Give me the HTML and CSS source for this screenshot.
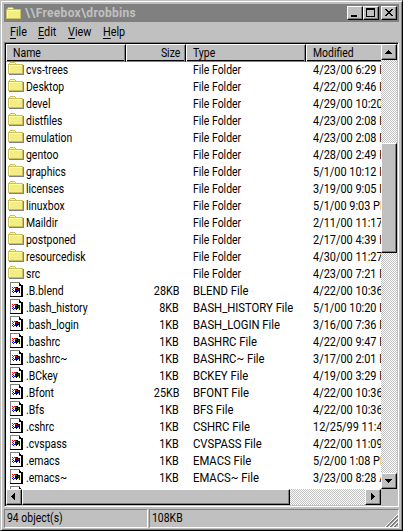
FILE: index.html
```
<!DOCTYPE html>
<html lang="en">
<head>
<meta charset="utf-8">
<title>\\Freebox\drobbins</title>
<link rel="stylesheet" href="styles.css">
</head>
<body>
<svg width="0" height="0" class="defs" shape-rendering="crispEdges">
  <symbol id="folder" viewBox="0 0 16 13">
    <path fill="#c8c060" d="M2 0h5v1h1v1h7v10H0V2h1V1h1z"/>
    <path fill="#ffff98" d="M2 1h5v1H2zM1 3h13v8H1z"/>
    <path fill="#f4ec84" d="M2 4h12v7H2z"/>
    <path fill="#808080" d="M15 3h1v10H1v-1h14z"/>
  </symbol>
  <symbol id="file" viewBox="0 0 13 16">
    <path fill="#fff" d="M0 0h10l2 3v12H0z"/>
    <path fill="#808080" d="M0 0h10v1H1v13H0z"/>
    <path fill="#000" d="M9 1h1v1h1v1h2v12H0v-1h11V4H9z"/>
    <path fill="#000" d="M6 5h2v1h2v5H9v-1H7v1H6v-1H5V6h1z"/>
    <path fill="#f00" d="M2 5h1v1H2zM4 5h2v1H4zM3 6h1v1H3zM5 6h2v1H5zM2 7h1v1H2z"/>
    <path fill="#00f" d="M2 9h1v1H2zM3 8h1v1H3zM5 8h2v1H5zM4 9h2v1H4zM3 10h1v1H3z"/>
    <path fill="#008000" d="M8 7h1v1H8z"/>
    <path fill="#e0e000" d="M8 9h1v1H8z"/>
  </symbol>
</svg>
<div class="window">
  <header class="title">
    <svg class="folder"><use href="#folder"/></svg>
    <h1>\\Freebox\drobbins</h1>
    <div class="btn ctl"><svg viewBox="0 0 14 12"><path d="M3 8h6v2H3z"/></svg></div>
    <div class="btn ctl"><svg viewBox="0 0 14 12"><path fill-rule="evenodd" d="M2 1h9v9H2zM3 3v6h7V3z"/></svg></div>
    <div class="btn ctl close"><svg viewBox="0 0 14 12"><path d="M3 2h2v1h1v1h2V3h1V2h2v1h-1v1H9v1H8v1h1v1h1v1h1v1H9V8H8V7H6v1H5v1H3V8h1V7h1V6h1V5H5V4H4V3H3z"/></svg></div>
  </header>
  <nav class="menu"><span><u>F</u>ile</span><span><u>E</u>dit</span><span><u>V</u>iew</span><span><u>H</u>elp</span></nav>
  <main class="list">
    <section class="view">
      <div class="head"><div><span>Name</span></div><div class="size"><span>Size</span></div><div><span>Type</span></div><div><span>Modified</span></div></div>
      <div class="rows" id="rows"></div>
    </section>
    <div class="vbar">
      <div class="btn arrow"><svg viewBox="0 0 14 14"><path d="M6 5h1v1h1v1h1v1h1v1H3V8h1V7h1V6h1z"/></svg></div>
      <div class="btn vthumb"></div>
      <div class="btn arrow down"><svg viewBox="0 0 14 14"><path d="M3 5h7v1H9v1H8v1H7v1H6V8H5V7H4V6H3z"/></svg></div>
    </div>
    <div class="hbar">
      <div class="btn arrow"><svg viewBox="0 0 14 14"><path d="M8 3v7H7V9H6V8H5V7H4V6h1V5h1V4h1V3z"/></svg></div>
      <div class="btn hthumb"></div>
      <div class="btn arrow right"><svg viewBox="0 0 14 14"><path d="M5 3h1v1h1v1h1v1h1v1H8v1H7v1H6v1H5z"/></svg></div>
    </div>
    <div class="corner"></div>
  </main>
  <footer class="status">
    <div><span>94 object(s)</span></div>
    <div><span>108KB</span><svg class="grip" viewBox="0 0 13 13"><path stroke="#fff" d="M0 13L13 0M4 13l9-9M8 13l5-5"/><path stroke="#808080" stroke-width="1.6" d="M1.5 13L13 1.5M5.5 13L13 5.5M9.5 13L13 9.5"/></svg></div>
  </footer>
</div>
<script src="rows.js"></script>
</body>
</html>
```
FILE: styles.css
```
* { box-sizing: border-box; }
body { margin: 0; overflow: hidden; font: 12px/17px Roboto, "Liberation Sans", sans-serif; color: #000; }
.defs { position: absolute; }
svg { display: block; shape-rendering: crispEdges; }
.window { width: 403px; height: 531px; background: #c0c0c0; padding: 3px 3px 2px; border: 1px solid #c0c0c0; border-right-color: #000; border-bottom-color: #000; box-shadow: inset 1px 1px #fff, inset -1px -1px #808080; }
.title { display: flex; align-items: center; height: 18px; width: 395px; background: #808080; padding: 0 2px; }
.title h1 { flex: 1; margin: 0 0 0 3px; font: bold 12px/18px Roboto, sans-serif; color: #c0c0c0; letter-spacing: .3px; white-space: pre; }
.folder { width: 16px; height: 13px; flex: none; }
.btn { background: #c0c0c0; border: 1px solid #fff; border-right-color: #000; border-bottom-color: #000; box-shadow: inset -1px -1px #808080; flex: none; }
.ctl { width: 16px; height: 14px; }
.close { margin-left: 2px; }
.ctl svg { width: 14px; height: 12px; }
.menu { display: grid; grid-template-columns: 28px 30px 35px 40px; height: 20px; padding: 0 0 0 6px; line-height: 20px; }
.menu span { transform: scaleX(.9); transform-origin: 0 0; }
.menu u { text-underline-offset: 2px; }
.list { display: grid; grid-template-columns: 375px 16px; grid-template-rows: 445px 16px; width: 395px; height: 465px; border: 1px solid; border-color: #808080 #fff #fff #808080; box-shadow: inset 1px 1px #000; padding: 1px; }
.view { overflow: hidden; background: #fff; min-width: 0; }
.head { display: grid; grid-template-columns: 120px 60px 120px 90px; height: 17px; border-bottom: 1px solid #000; background: #c0c0c0; }
.head div { border: 1px solid #fff; border-right-color: #000; border-bottom: 1px solid #808080; box-shadow: inset -1px 0 #808080; padding: 1px 6px 0; line-height: 15px; }
.head span, .row span, .status span { display: inline-block; transform: scaleX(.87); transform-origin: 0 0; }
.head .size { text-align: right; padding-right: 5px; }
.head .size span, .row .size span { transform-origin: 100% 0; }
.row { display: grid; grid-template-columns: 20px 100px 60px 120px 100px; height: 17px; line-height: 19px; white-space: nowrap; }
.row .icon { padding: 1px 0 0 2px; }
.row .icon.doc { padding: 0 0 0 4px; }
.row .doc svg { width: 13px; height: 16px; }
.row .size { text-align: right; padding-right: 7px; }
.row .size span { transform: scaleX(.9); }
.row .type, .row .date { padding-left: 7px; }
.row .type.named span { transform: scaleX(.94); }
.row .date span { transform: scaleX(.91); }
.vbar, .hbar { background: repeating-conic-gradient(#c0c0c0 0 25%, #fff 0 50%) 0 0 / 2px 2px; display: flex; }
.vbar { flex-direction: column; }
.arrow { width: 16px; height: 16px; }
.arrow svg { width: 14px; height: 14px; }
.vthumb { height: 110px; margin-top: 83px; }
.down { margin-top: auto; }
.hthumb { width: 268px; }
.right { margin-left: auto; }
.corner { background: #c0c0c0; }
.status { display: grid; grid-template-columns: 144px 250px; gap: 1px; margin-top: 2px; height: 18px; width: 395px; }
.status div { border: 1px solid; border-color: #808080 #fff #fff #808080; padding-left: 2px; line-height: 17px; position: relative; }
.status span { transform: scaleX(.87); }
.grip { position: absolute; right: 0; bottom: 0; width: 13px; height: 13px; }
```
FILE: rows.js
```
const folders = [
  ["cvs-trees", "4/23/00 6:29 PM"], ["Desktop", "4/22/00 9:46 PM"], ["devel", "4/29/00 10:20 PM"],
  ["distfiles", "4/23/00 2:08 PM"], ["emulation", "4/23/00 2:08 PM"], ["gentoo", "4/28/00 2:49 PM"],
  ["graphics", "5/1/00 10:12 PM"], ["licenses", "3/19/00 9:05 PM"], ["linuxbox", "5/1/00 9:03 PM"],
  ["Maildir", "2/11/00 11:17 PM"], ["postponed", "2/17/00 4:39 PM"], ["resourcedisk", "4/30/00 11:27 PM"],
  ["src", "4/23/00 7:21 PM"]
];
const files = [
  [".B.blend", 28, "BLEND", "4/22/00 10:36 PM"], [".bash_history", 8, "BASH_HISTORY", "5/1/00 10:20 PM"],
  [".bash_login", 1, "BASH_LOGIN", "3/16/00 7:36 PM"], [".bashrc", 1, "BASHRC", "4/22/00 9:47 PM"],
  [".bashrc~", 1, "BASHRC~", "3/17/00 2:01 PM"], [".BCkey", 1, "BCKEY", "4/19/00 3:29 PM"],
  [".Bfont", 25, "BFONT", "4/22/00 10:36 PM"], [".Bfs", 1, "BFS", "4/22/00 10:36 PM"],
  [".cshrc", 1, "CSHRC", "12/25/99 11:41 PM"], [".cvspass", 1, "CVSPASS", "4/22/00 11:09 PM"],
  [".emacs", 1, "EMACS", "5/2/00 1:08 PM"], [".emacs~", 1, "EMACS~", "3/23/00 8:28 AM"]
];
const row = (icon, name, size, type, date) => {
  const doc = icon === "file";
  return `<div class="row"><div class="icon${doc ? " doc" : ""}"><svg class="folder"><use href="#${icon}"/></svg></div>` +
    `<div><span>${name}</span></div><div class="size"><span>${size}</span></div>` +
    `<div class="type${doc ? " named" : ""}"><span>${type}</span></div><div class="date"><span>${date}</span></div></div>`;
};
document.getElementById("rows").innerHTML =
  folders.map(([n, d]) => row("folder", n, "", "File Folder", d)).join("") +
  files.map(([n, s, t, d]) => row("file", n, s + "KB", t + " File", d)).join("") +
  row("file", "", "", "", "");
```
